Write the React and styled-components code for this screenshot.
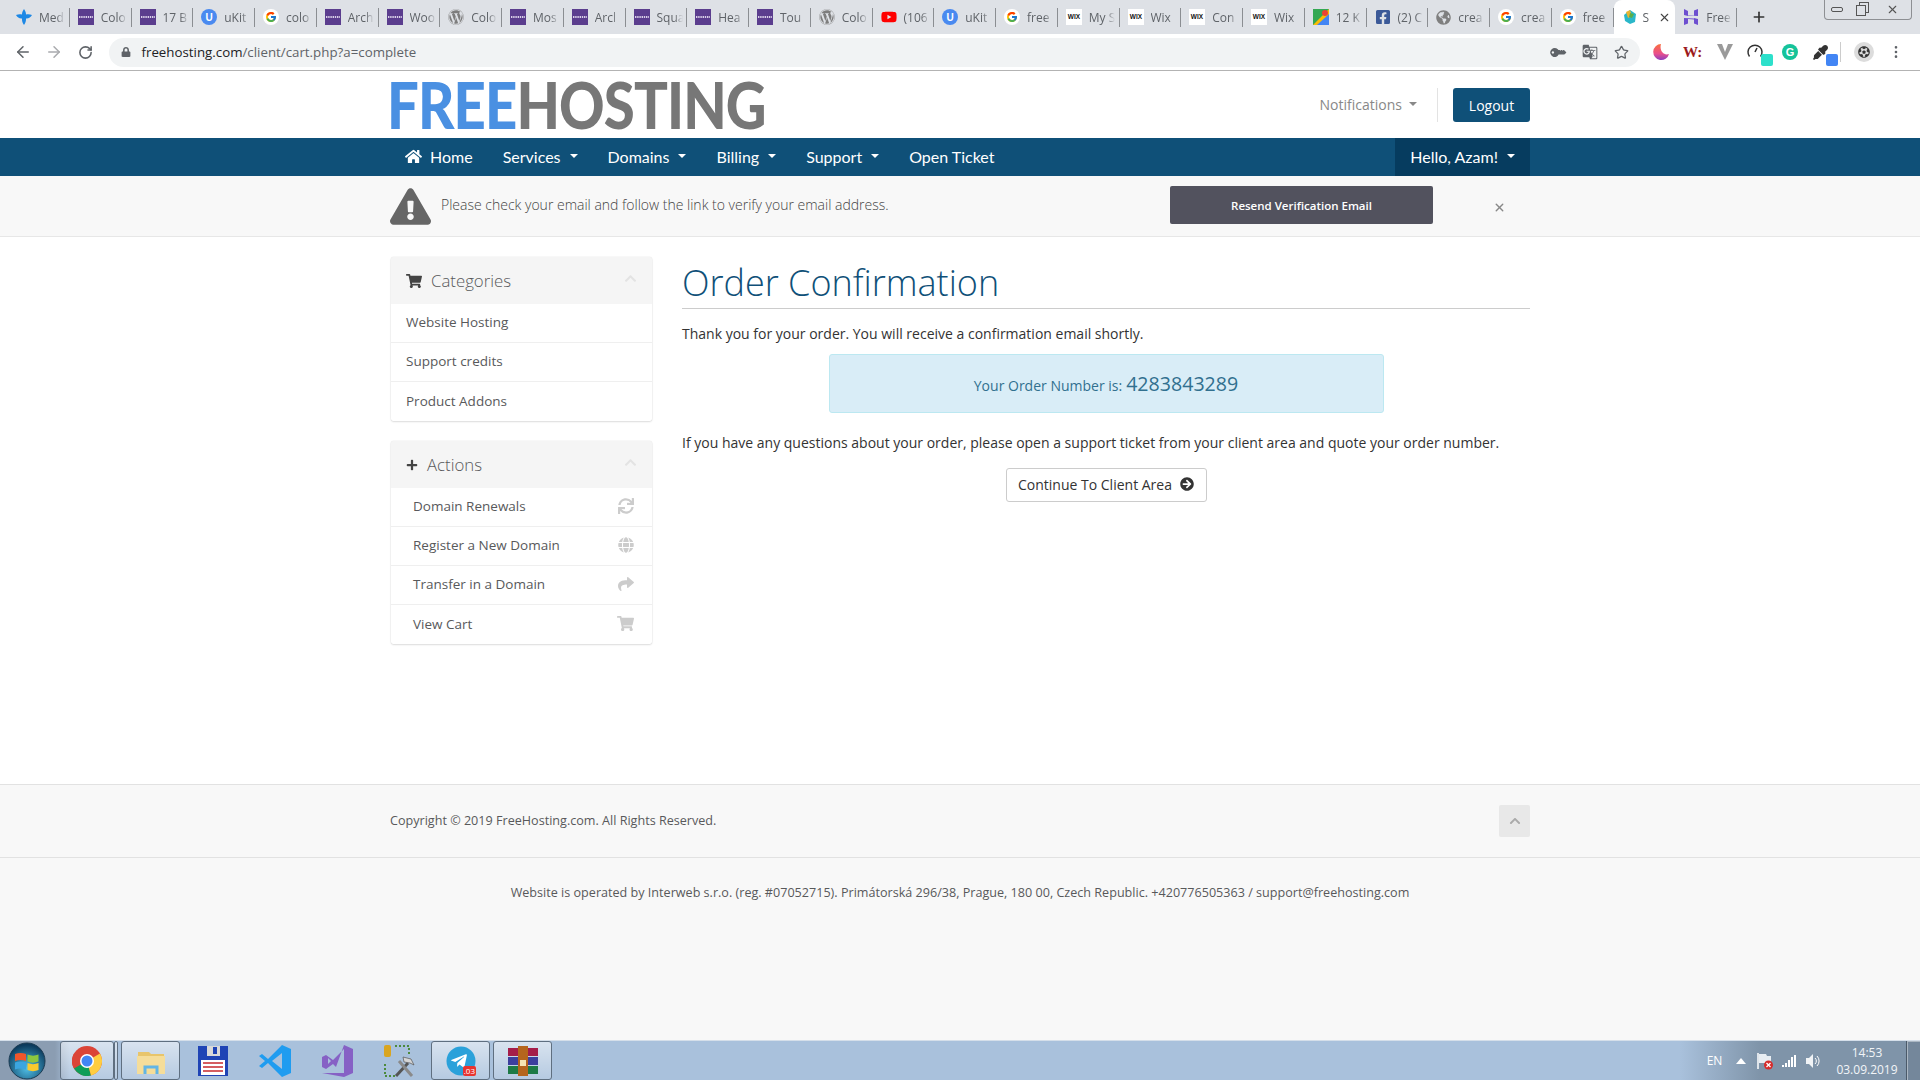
import React from 'react'
import styled, { createGlobalStyle } from 'styled-components'
import { ArrowLeft, ArrowRight, RotateCw, Star, MoreVertical, Plus, X } from 'lucide-react'
import {
  FaHome, FaShoppingCart, FaPlus, FaChevronUp, FaSync, FaGlobe, FaShare,
  FaExclamationTriangle, FaArrowCircleRight, FaKey, FaLock, FaWordpress,
  FaYoutube, FaFacebookSquare, FaGlobeAmericas, FaEyeDropper, FaFutbol, FaTelegramPlane,
} from 'react-icons/fa'
import { FcGoogle } from 'react-icons/fc'
import { MdGTranslate } from 'react-icons/md'

const GlobalStyle = createGlobalStyle`
  html, body { margin: 0; padding: 0; background: #fff; }
  body { font-family: "Open Sans", "Liberation Sans", sans-serif; font-size: 14px; color: #333; }
  * { box-sizing: border-box; }
`

const NAVY = '#0f5078'

const Page = styled.div`
  width: 1920px;
  height: 1080px;
  display: flex;
  flex-direction: column;
  overflow: hidden;
`

/* browser chrome */
const TabStrip = styled.div`
  height: 34px;
  background: #dee1e6;
  display: flex;
  padding-left: 8px;
`
const Tab = styled.div`
  width: 61.75px;
  height: 34px;
  display: flex;
  align-items: center;
  gap: 7px;
  padding-left: 8px;
  position: relative;
  flex: none;
  font-size: 12px;
  color: #5f6368;
  &::after {
    content: "";
    position: absolute;
    right: 0;
    top: 8px;
    height: 19px;
    width: 1px;
    background: #8b8e92;
  }
`
const ActiveTab = styled(Tab)`
  background: #fff;
  border-radius: 8px 8px 0 0;
  padding-left: 9px;
  gap: 6px;
  &::after { display: none; }
`
const TabLabel = styled.span`
  width: 29px;
  white-space: nowrap;
  -webkit-mask-image: linear-gradient(to right, #000 60%, transparent 90%);
  mask-image: linear-gradient(to right, #000 60%, transparent 90%);
`
const NewTab = styled.div`
  width: 44px;
  height: 34px;
  display: flex;
  align-items: center;
  justify-content: center;
  color: #333;
`
const WindowButtons = styled.div`
  margin-left: auto;
  margin-right: 8px;
  width: 88px;
  height: 20px;
  display: flex;
  border: 1px solid #8d8f93;
  border-top: none;
  border-radius: 0 0 4px 4px;
`
const WindowButton = styled.div`
  width: ${p => p.$w}px;
  display: flex;
  align-items: center;
  justify-content: center;
  color: #555;
`
const MinBar = styled.span`
  width: 12px;
  height: 5px;
  border: 1px solid #555;
  border-radius: 2px;
`
const RestoreBox = styled.span`
  width: 10px;
  height: 11px;
  margin: 2px 2px 0 0;
  border: 1px solid #555;
  box-shadow: 3px -3px 0 -1px #dee1e6, 3px -3px 0 0 #555;
`
const Toolbar = styled.div`
  height: 37px;
  background: #fff;
  border-bottom: 1px solid #b3b3b3;
  display: flex;
  align-items: center;
  padding: 0 0 0 13px;
  color: #5f6368;
`
const NavIcon = styled.div`
  width: 31.5px;
  display: flex;
  justify-content: center;
  flex: none;
  margin-left: ${p => p.$first ? '-6px' : '0'};
  color: ${p => p.$dim ? '#a9abae' : '#5f6368'};
`
const AddressPill = styled.div`
  width: 1531px;
  height: 29px;
  margin-left: 7px;
  background: #f1f3f4;
  border-radius: 15px;
  display: flex;
  align-items: center;
  padding: 0 2px 0 12px;
  flex: none;
`
const Url = styled.div`
  margin-left: 11px;
  font-size: 13.3px;
  color: #202124;
  flex: 1;
  span { color: #5f6368; }
`
const PillIcon = styled.div`
  width: 32px;
  display: flex;
  justify-content: center;
`
const KeyGlyph = styled(FaKey)`
  transform: rotate(-135deg);
`
const Extensions = styled.div`
  display: flex;
  align-items: center;
  margin-left: 5px;
`
const ExtIcon = styled.div`
  width: 32.4px;
  height: 30px;
  display: flex;
  align-items: center;
  justify-content: center;
  position: relative;
  flex: none;
`
const ExtBadge = styled.span`
  position: absolute;
  right: 1px;
  bottom: 1px;
  width: 12px;
  height: 12px;
  border-radius: 2px;
  background: ${p => p.$color};
`
const ExtDivider = styled.div`
  width: 1px;
  height: 20px;
  background: #ccc;
  margin: 0 7px 0 1px;
`
const AvatarCircle = styled.div`
  width: 20px;
  height: 20px;
  border-radius: 50%;
  background: #dcdcdc;
  display: flex;
  align-items: center;
  justify-content: center;
  color: #333;
`

/* site header */
const Container = styled.div`
  width: 1140px;
  margin: 0 auto;
  display: flex;
  align-items: center;
  height: 100%;
`
const SiteHeader = styled.header`
  height: 67px;
  background: #fff;
  flex: none;
`
const Logo = styled.div`
  font-family: Lato, sans-serif;
  font-weight: 900;
  font-size: 65px;
  line-height: 67px;
  letter-spacing: -1px;
  white-space: nowrap;
  color: #777;
  margin-left: -3px;
  transform: scaleX(0.865);
  transform-origin: left center;
  span { color: #4a90e2; }
`
const HeaderRight = styled.div`
  margin-left: auto;
  margin-top: 1px;
  display: flex;
  align-items: center;
`
const Notifications = styled.div`
  color: #888;
  font-size: 14px;
  display: flex;
  align-items: center;
  gap: 7px;
  margin-top: -2px;
  margin-right: 1px;
`
const HeaderDivider = styled.div`
  width: 1px;
  height: 34px;
  background: #e3e3e3;
  margin: 0 15px 0 19px;
`
const LogoutButton = styled.div`
  width: 77px;
  height: 34px;
  background: ${NAVY};
  border-radius: 3px;
  color: #fff;
  font-size: 14px;
  display: flex;
  align-items: center;
  justify-content: center;
`
const Caret = styled.span`
  width: 0;
  height: 0;
  display: inline-block;
  border-top: 4px solid ${p => p.$color || '#fff'};
  border-left: 4px solid transparent;
  border-right: 4px solid transparent;
  margin-left: ${p => p.$gap ?? 9}px;
`
const MainNav = styled.nav`
  height: 38px;
  background: ${NAVY};
  flex: none;
`
const NavItem = styled.div`
  height: 38px;
  padding: 0 15px 2px;
  display: flex;
  align-items: center;
  color: #fff;
  font-family: Lato, sans-serif;
  font-size: 16px;
  white-space: nowrap;
  background: ${p => p.$dark ? '#063c5f' : 'transparent'};
  margin-left: ${p => p.$right ? 'auto' : '0'};
  svg { margin-right: 8px; }
`
const AlertBar = styled.div`
  height: 61px;
  background: #f8f8f8;
  border-bottom: 1px solid #e7e7e7;
  padding-bottom: 2px;
  flex: none;
`
const AlertIcon = styled(FaExclamationTriangle)`
  margin-top: 2px;
  flex: none;
`
const AlertText = styled.div`
  margin: -2px 0 0 10px;
  font-weight: 300;
  font-size: 14px;
  color: #444;
  flex: 1;
`
const ResendButton = styled.div`
  width: 263px;
  height: 38px;
  background: #52525e;
  border-radius: 2px;
  color: #fff;
  font-size: 11.5px;
  font-weight: 600;
  display: flex;
  align-items: center;
  justify-content: center;
`
const CloseMark = styled.div`
  margin: 4px 24px 0 60px;
  display: flex;
  color: #888;
`

/* body */
const Content = styled.main`
  flex: 1;
  background: #fff;
`
const ContentInner = styled.div`
  width: 1140px;
  margin: 0 auto;
  padding-top: 20px;
  display: flex;
  gap: 30px;
  align-items: flex-start;
`
const Sidebar = styled.aside`
  width: 261px;
  margin-left: 1px;
  flex: none;
  display: flex;
  flex-direction: column;
  gap: 20px;
`
const Panel = styled.section`
  border-radius: 3px;
  overflow: hidden;
  box-shadow: 0 0 1px rgba(0, 0, 0, .25), 0 1px 2px rgba(0, 0, 0, .12);
`
const PanelHead = styled.div`
  height: 47px;
  background: #f5f5f5;
  display: flex;
  align-items: center;
  padding: 0 15px;
  font-size: 16.800px;
  font-weight: 300;
  color: #58595b;
  svg:first-child { color: #444; margin-right: ${p => p.$iconGap}px; }
  svg:last-child { margin-left: auto; color: #e3e3e3; margin-top: -4px; }
`
const PanelRow = styled.div`
  height: 39px;
  display: flex;
  align-items: center;
  justify-content: space-between;
  padding: 0 18px 2px ${p => p.$indent ? 22 : 15}px;
  font-size: 13.500px;
  color: #58595b;
  background: #fff;
  border-bottom: 1px solid #efefef;
  &:last-child { border-bottom: none; }
  svg { color: #ccc; }
`
const Main = styled.div`
  flex: 1;
  min-width: 0;
`
const Title = styled.h1`
  margin: 6px 0 0;
  font-size: 36px;
  line-height: 40px;
  font-weight: 300;
  color: ${NAVY};
  padding-bottom: 5px;
  border-bottom: 1px solid #ccc;
`
const Para = styled.p`
  margin: ${p => p.$top}px 0 0;
  line-height: 20px;
  font-size: 14px;
  color: #333;
`
const OrderBox = styled.div`
  width: 555px;
  height: 59px;
  margin: 10px auto 0;
  background: #d9edf7;
  border: 1px solid #bce8f1;
  border-radius: 3px;
  color: #31708f;
  display: flex;
  align-items: baseline;
  justify-content: center;
  padding-top: 15px;
  gap: 4px;
  b { font-weight: 400; font-size: 19.6px; }
`
const ContinueButton = styled.div`
  width: 201px;
  height: 34px;
  margin: 15px auto 0;
  padding-bottom: 2px;
  background: #fff;
  border: 1px solid #ccc;
  border-radius: 3px;
  display: flex;
  align-items: center;
  justify-content: center;
  gap: 8px;
  color: #333;
`

/* footer */
const FooterTop = styled.div`
  height: 74px;
  background: #f8f8f8;
  border-top: 1px solid #e2e2e2;
  border-bottom: 1px solid #e2e2e2;
  font-size: 12.6px;
  color: #58595b;
  flex: none;
`
const FooterNote = styled.span`
  margin-top: -2px;
`
const BackToTop = styled.div`
  margin-left: auto;
  width: 31px;
  height: 32px;
  background: #e8e8e8;
  border-radius: 2px;
  display: flex;
  align-items: center;
  justify-content: center;
  color: #aaa;
`
const FooterBottom = styled.div`
  height: 182px;
  background: #f8f8f8;
  padding-top: 25px;
  line-height: 20px;
  text-align: center;
  font-size: 12.6px;
  color: #58595b;
  flex: none;
`

/* windows taskbar */
const Taskbar = styled.div`
  height: 40px;
  flex: none;
  display: flex;
  align-items: center;
  background: linear-gradient(to right, #8b9db2 0, #8b9db2 55px, #a9c1dc 70px, #a9c1dc 1680px, #7f94a9 1760px, #7f94a9 100%);
  border-top: 1px solid #d5dfea;
`
const StartCell = styled.div`
  width: 60px;
  display: flex;
  justify-content: center;
  padding-right: 6px;
  flex: none;
`
const TaskCell = styled.div`
  width: ${p => p.$w || 59}px;
  height: 39px;
  margin-right: ${p => p.$mr ?? 3}px;
  flex: none;
  display: flex;
  align-items: center;
  justify-content: center;
  position: relative;
  ${p => p.$framed && `
    border: 1px solid #5f6f80;
    border-radius: 3px;
    background: linear-gradient(to bottom, rgba(255,255,255,.55), rgba(255,255,255,.15));
  `}
`
const Sliver = styled(TaskCell)`
  width: 4px;
  margin-right: 3px;
`
const PlaneIcon = styled(FaTelegramPlane)`
  position: absolute;
  left: 18px;
  top: 10px;
`
const CountBadge = styled.span`
  position: absolute;
  right: 13px;
  bottom: 3px;
  background: #e8342f;
  color: #fff;
  border-radius: 2px;
  font-size: 8px;
  line-height: 10px;
  padding: 0 1px;
`
const Tray = styled.div`
  margin-left: auto;
  display: flex;
  align-items: center;
  height: 39px;
  color: #fff;
`
const TrayCell = styled.div`
  width: ${p => p.$w || 24}px;
  display: flex;
  justify-content: center;
  align-items: center;
  font-size: 12px;
`
const Clock = styled.div`
  width: 78px;
  margin-left: 3px;
  text-align: center;
  font-size: 12px;
  line-height: 17px;
  color: #f2f5f8;
`
const ShowDesktop = styled.div`
  width: 14px;
  height: 39px;
  border-left: 1px solid #4b5a69;
  background: #74879b;
  box-shadow: inset 1px 1px 0 rgba(255, 255, 255, .4);
`

const ColorlibIcon = () => (
  <svg width="16" height="16" viewBox="0 0 16 16">
    <rect width="16" height="16" fill="#5b3d8e" />
    <line x1="1" y1="8" x2="15" y2="8" stroke="#d9cfe8" strokeWidth="2" strokeDasharray="1.4 .8" />
  </svg>
)
const LetterIcon = ({ bg, color, letter, size = 10, round }) => (
  <svg width="16" height="16" viewBox="0 0 16 16">
    {round ? <circle cx="8" cy="8" r="8" fill={bg} /> : <rect width="16" height="16" fill={bg} />}
    <text x="8" y="8" dy=".36em" textAnchor="middle" fontSize={size} fontWeight="700" fontFamily="Liberation Sans, sans-serif" fill={color}>{letter}</text>
  </svg>
)
const Favicon = ({ kind }) => {
  switch (kind) {
    case 'med':
      return (
        <svg width="16" height="16" viewBox="0 0 16 16">
          <path d="M8 0c1.400 2 2 3.600 2 5.500 2-.4 4-.3 6 .5-1.400 2.600-3.300 3.600-6 3.400.2 2.400-.6 4.600-2 6.600-1.400-2-2.200-4.200-2-6.600C3.300 9.600 1.400 8.600 0 6c2-.8 4-.9 6-.5C6 3.600 6.600 2 8 0z" fill="#1e88e5" />
        </svg>
      )
    case 'colorlib': return <ColorlibIcon />
    case 'ukit': return <LetterIcon bg="#4a8af0" color="#fff" letter="U" round />
    case 'google':
      return (
        <svg width="16" height="16" viewBox="0 0 16 16"><circle cx="8" cy="8" r="8" fill="#fff" /><FcGoogle x="2" y="2" size={12} /></svg>
      )
    case 'wp': return <FaWordpress size={16} color="#7d7d7d" />
    case 'yt': return <FaYoutube size={16} color="#f00" />
    case 'wix': return <LetterIcon bg="#fff" color="#111" letter="WIX" size={6.500} />
    case 'maps':
      return (
        <svg width="16" height="16" viewBox="0 0 16 16">
          <rect width="16" height="16" fill="#34a853" />
          <polygon points="0,16 16,0 16,16" fill="#fbbc04" />
          <polygon points="4,16 16,5 16,16" fill="#4285f4" />
          <circle cx="12" cy="4" r="3" fill="#ea4335" />
        </svg>
      )
    case 'fb': return <FaFacebookSquare size={16} color="#3b5998" />
    case 'globe': return <FaGlobeAmericas size={15} color="#7f7f7f" />
    case 'active':
      return (
        <svg width="14" height="16" viewBox="0 0 14 16">
          <path d="M1 6l6-5 6 4-1 8-5 2-5-3z" fill="#2ab7c9" />
          <path d="M3 3l4-2 2 6-4 2z" fill="#e9b531" />
          <path d="M7 4l4 1-2 4-3-1z" fill="#5bae48" />
        </svg>
      )
    case 'host':
      return (
        <svg width="16" height="16" viewBox="0 0 16 16">
          <path d="M1 0l4 2v4l6 .5V1.500L15 0v7L5 6.500V7L1 6zM1 9l10 .5V9l4 1v6l-4-1.500V10.500L5 10v4.500L1 16z" fill="#6d4fd0" />
        </svg>
      )
    default: return null
  }
}

const tabs = [
  ['med', 'Med'], ['colorlib', 'Colo'], ['colorlib', '17 B'], ['ukit', 'uKit'], ['google', 'colo'],
  ['colorlib', 'Arch'], ['colorlib', 'Woo'], ['wp', 'Colo'], ['colorlib', 'Mos'], ['colorlib', 'Arcl'],
  ['colorlib', 'Squa'], ['colorlib', 'Hea'], ['colorlib', 'Tou'], ['wp', 'Colo'], ['yt', '(106'],
  ['ukit', 'uKit'], ['google', 'free'], ['wix', 'My S'], ['wix', 'Wix'], ['wix', 'Con'],
  ['wix', 'Wix'], ['maps', '12 K'], ['fb', '(2) C'], ['globe', 'crea'], ['google', 'crea'], ['google', 'free'],
]

const Extras = () => (
  <Extensions>
    <ExtIcon>
      <svg width="18" height="18" viewBox="0 0 18 18">
        <defs>
          <linearGradient id="moon" x1="0" y1="0" x2="0" y2="1">
            <stop offset="0" stopColor="#f9703c" />
            <stop offset=".6" stopColor="#ea4f8c" />
            <stop offset="1" stopColor="#8d3fc0" />
          </linearGradient>
        </defs>
        <path d="M9 1a8 8 0 1 0 8 10c-5 2-10-3-8-10z" fill="url(#moon)" />
      </svg>
    </ExtIcon>
    <ExtIcon>
      <svg width="20" height="16" viewBox="0 0 20 16">
        <text x="0" y="13" fontSize="15" fontWeight="700" fontFamily="Liberation Serif, serif" fill="#9c1b1b">W:</text>
      </svg>
    </ExtIcon>
    <ExtIcon>
      <svg width="18" height="16" viewBox="0 0 18 16"><path d="M1 0h5l3 8 3-8h5l-8 16z" fill="#9a9a9a" /></svg>
    </ExtIcon>
    <ExtIcon>
      <svg width="16" height="16" viewBox="0 0 16 16" style={{ marginRight: 6 }}>
        <path d="M2.500 12.500a7 7 0 1 1 11 0" fill="none" stroke="#333" strokeWidth="1.500" />
        <path d="M8 8l2-4" stroke="#333" strokeWidth="1.500" />
      </svg>
      <ExtBadge $color="#2de0cb" />
    </ExtIcon>
    <ExtIcon>
      <LetterIcon bg="#15c39a" color="#fff" letter="G" size={11} round />
    </ExtIcon>
    <ExtIcon>
      <FaEyeDropper size={15} color="#333" style={{ marginRight: 5 }} />
      <ExtBadge $color="#4285f4" />
    </ExtIcon>
    <ExtDivider />
    <ExtIcon>
      <AvatarCircle><FaFutbol size={12} /></AvatarCircle>
    </ExtIcon>
    <ExtIcon><MoreVertical size={16} color="#5f6368" /></ExtIcon>
  </Extensions>
)

const BrowserChrome = () => (
  <>
    <TabStrip>
      {tabs.map(([kind, label], i) => (
        <Tab key={i}><Favicon kind={kind} /><TabLabel>{label}</TabLabel></Tab>
      ))}
      <ActiveTab>
        <Favicon kind="active" />
        <TabLabel style={{ width: 9 }}>S</TabLabel>
        <X size={13} color="#444" />
      </ActiveTab>
      <Tab><Favicon kind="host" /><TabLabel>Free</TabLabel></Tab>
      <NewTab><Plus size={16} strokeWidth={2.5} /></NewTab>
      <WindowButtons>
        <WindowButton $w={24}><MinBar /></WindowButton>
        <WindowButton $w={25}><RestoreBox /></WindowButton>
        <WindowButton $w={37}><X size={13} /></WindowButton>
      </WindowButtons>
    </TabStrip>
    <Toolbar>
      <NavIcon $first><ArrowLeft size={18} /></NavIcon>
      <NavIcon $dim><ArrowRight size={18} /></NavIcon>
      <NavIcon><RotateCw size={15} strokeWidth={2.500} /></NavIcon>
      <AddressPill>
        <FaLock size={10} color="#5f6368" />
        <Url>freehosting.com<span>/client/cart.php?a=complete</span></Url>
        <PillIcon><KeyGlyph size={13} color="#5f6368" /></PillIcon>
        <PillIcon><MdGTranslate size={16} color="#5f6368" /></PillIcon>
        <PillIcon><Star size={15} color="#5f6368" strokeWidth={2} /></PillIcon>
      </AddressPill>
      <Extras />
    </Toolbar>
  </>
)

const SiteTop = () => (
  <>
    <SiteHeader>
      <Container>
        <Logo><span>FREE</span>HOSTING</Logo>
        <HeaderRight>
          <Notifications>Notifications <Caret $color="#888" $gap={0} /></Notifications>
          <HeaderDivider />
          <LogoutButton>Logout</LogoutButton>
        </HeaderRight>
      </Container>
    </SiteHeader>
    <MainNav>
      <Container>
        <NavItem><FaHome size={17} />Home</NavItem>
        <NavItem>Services<Caret /></NavItem>
        <NavItem>Domains<Caret /></NavItem>
        <NavItem>Billing<Caret /></NavItem>
        <NavItem>Support<Caret /></NavItem>
        <NavItem>Open Ticket</NavItem>
        <NavItem $right $dark>Hello, Azam!<Caret /></NavItem>
      </Container>
    </MainNav>
    <AlertBar>
      <Container>
        <AlertIcon size={41} color="#666" />
        <AlertText>Please check your email and follow the link to verify your email address.</AlertText>
        <ResendButton>Resend Verification Email</ResendButton>
        <CloseMark><X size={13} strokeWidth={2.500} /></CloseMark>
      </Container>
    </AlertBar>
  </>
)

const SideMenu = () => (
  <Sidebar>
    <Panel>
      <PanelHead $iconGap={9}>
        <FaShoppingCart size={16} />Categories<FaChevronUp size={13} />
      </PanelHead>
      <PanelRow>Website Hosting</PanelRow>
      <PanelRow>Support credits</PanelRow>
      <PanelRow>Product Addons</PanelRow>
    </Panel>
    <Panel>
      <PanelHead $iconGap={9}>
        <FaPlus size={12} />Actions<FaChevronUp size={13} />
      </PanelHead>
      <PanelRow $indent>Domain Renewals<FaSync size={16} /></PanelRow>
      <PanelRow $indent>Register a New Domain<FaGlobe size={16} /></PanelRow>
      <PanelRow $indent>Transfer in a Domain<FaShare size={16} /></PanelRow>
      <PanelRow $indent>View Cart<FaShoppingCart size={17} /></PanelRow>
    </Panel>
  </Sidebar>
)

const Footer = () => (
  <>
    <FooterTop>
      <Container>
        <FooterNote>Copyright © 2019 FreeHosting.com. All Rights Reserved.</FooterNote>
        <BackToTop><FaChevronUp size={12} /></BackToTop>
      </Container>
    </FooterTop>
    <FooterBottom>
      Website is operated by Interweb s.r.o. (reg. #07052715). Primátorská 296/38, Prague, 180 00, Czech Republic. +420776505363 / support@freehosting.com
    </FooterBottom>
  </>
)

const WindowsTaskbar = () => (
  <Taskbar>
    <StartCell>
      <svg width="38" height="38" viewBox="0 0 38 38">
        <defs>
          <radialGradient id="orb" cx=".5" cy=".7" r=".65">
            <stop offset="0" stopColor="#4fc0e8" />
            <stop offset="1" stopColor="#0c3a5c" />
          </radialGradient>
        </defs>
        <circle cx="19" cy="19" r="18" fill="url(#orb)" stroke="#1c3b52" />
        <path d="M7 12c3.500-1.500 7.500-1.500 11 0v7c-3.500-1.500-7.500-1.500-11 0z" fill="#f0562b" />
        <path d="M19.500 12.500c3.500 1.500 7.500 1.500 11 0v7c-3.500 1.500-7.500 1.500-11 0z" fill="#8cc63f" />
        <path d="M7 20.500c3.500-1.500 7.500-1.500 11 0v7c-3.500-1.500-7.500-1.500-11 0z" fill="#3ba5e0" />
        <path d="M19.500 21c3.500 1.500 7.500 1.500 11 0v7c-3.500 1.500-7.500 1.500-11 0z" fill="#f9c92e" />
      </svg>
    </StartCell>
    <TaskCell $w={54} $mr={0} $framed>
      <svg width="30" height="30" viewBox="0 0 30 30">
        <circle cx="15" cy="15" r="15" fill="#db4437" />
        <path d="M15 15L2 22.500A15 15 0 0 1 2 7.500z" fill="#db4437" />
        <path d="M15 15L2 22.500A15 15 0 0 0 19 29.500z" fill="#0f9d58" />
        <path d="M15 15l4 14.500A15 15 0 0 0 28 7.500z" fill="#ffcd40" />
        <circle cx="15" cy="15" r="7" fill="#fff" />
        <circle cx="15" cy="15" r="5.500" fill="#4285f4" />
      </svg>
    </TaskCell>
    <Sliver $framed />
    <TaskCell $framed>
      <svg width="30" height="30" viewBox="0 0 30 30">
        <path d="M2 6h11l2 2h13v10H2z" fill="#e8c56b" />
        <path d="M1 10h28v18H1z" fill="#f5dd9a" />
        <path d="M9 28v-7h12v7" fill="none" stroke="#62b5e5" strokeWidth="3" />
      </svg>
    </TaskCell>
    <TaskCell>
      <svg width="32" height="34" viewBox="0 0 32 34">
        <path d="M1 2h30v30H1z" fill="#1f44b5" />
        <path d="M10 2h13v10H10z" fill="#d9d9d9" />
        <path d="M16 3h4v7h-4z" fill="#1f44b5" />
        <path d="M4 16h24v15H4z" fill="#fff" />
        <path d="M6 19h20M6 23h20M6 27h20" stroke="#c8282d" strokeWidth="1.500" />
      </svg>
    </TaskCell>
    <TaskCell>
      <svg width="32" height="34" viewBox="0 0 32 34">
        <path d="M23 1L9 15 3 10 0 12l6 5-6 5 3 2 6-5 14 14 9-4V5z" fill="#1f9cf0" />
        <path d="M23 9v16l-10-8z" fill="#a9c1dc" />
      </svg>
    </TaskCell>
    <TaskCell>
      <svg width="32" height="34" viewBox="0 0 32 34">
        <path d="M23 1l9 4v24l-9 4L1 29l22 0V5L12 16 5 11 1 13v10l4 2 7-5 3 3" fill="#8661c5" />
        <path d="M7 14v6l3-3z" fill="#a9c1dc" />
      </svg>
    </TaskCell>
    <TaskCell>
      <svg width="32" height="34" viewBox="0 0 32 34">
        <rect x="1" y="1" width="7" height="12" rx="2" fill="#d9a520" />
        <path d="M12 2h14v10M2 20v12h10" fill="none" stroke="#4d8a3c" strokeWidth="2" strokeDasharray="2 2" />
        <path d="M13 32l12-13" stroke="#555" strokeWidth="3" />
        <path d="M16 17l13 15" stroke="#8a8a8a" strokeWidth="3" />
        <path d="M20 13l8 2 3 6-4-2-6-1z" fill="#d5d5d5" stroke="#555" strokeWidth=".7" />
      </svg>
    </TaskCell>
    <TaskCell $framed>
      <svg width="30" height="30" viewBox="0 0 30 30"><circle cx="15" cy="15" r="14.500" fill="#2aa1da" /></svg>
      <PlaneIcon size={18} color="#fff" />
      <CountBadge>.03</CountBadge>
    </TaskCell>
    <TaskCell $framed>
      <svg width="32" height="32" viewBox="0 0 32 32">
        <rect x="1" y="3" width="30" height="8" fill="#a51d4a" />
        <rect x="1" y="12" width="30" height="8" fill="#3c3f9e" />
        <rect x="1" y="21" width="30" height="8" fill="#1d7a45" />
        <rect x="11" y="1" width="10" height="30" fill="#b5651d" />
        <rect x="13" y="15" width="6" height="6" fill="#f5e6b3" />
      </svg>
    </TaskCell>
    <Tray>
      <TrayCell $w={29}>EN</TrayCell>
      <TrayCell>
        <svg width="10" height="6" viewBox="0 0 10 6"><path d="M5 0l5 6H0z" fill="#fff" /></svg>
      </TrayCell>
      <TrayCell>
        <svg width="18" height="18" viewBox="0 0 18 18">
          <path d="M2 1v16" stroke="#fff" strokeWidth="1.500" />
          <path d="M3 2h7l1 2h4v7H3z" fill="#e8edf2" />
          <circle cx="12.500" cy="13" r="4.500" fill="#d62b2b" />
          <path d="M10.500 11l4 4M14.500 11l-4 4" stroke="#fff" strokeWidth="1.300" />
        </svg>
      </TrayCell>
      <TrayCell>
        <svg width="16" height="14" viewBox="0 0 16 14">
          <path d="M1 11h2v2H1zM4 9h2v4H4zM7 6h2v7H7zM10 3h2v10h-2zM13 1h2v12h-2z" fill="#fff" />
        </svg>
      </TrayCell>
      <TrayCell>
        <svg width="16" height="16" viewBox="0 0 16 16">
          <path d="M1 5h3l4-4v14l-4-4H1z" fill="#f0f3f6" />
          <path d="M10 5a4 4 0 0 1 0 6M12 3a7 7 0 0 1 0 10" fill="none" stroke="#fff" />
        </svg>
      </TrayCell>
      <Clock>14:53<br />03.09.2019</Clock>
      <ShowDesktop />
    </Tray>
  </Taskbar>
)

export default function App() {
  return (
    <Page>
      <GlobalStyle />
      <BrowserChrome />
      <SiteTop />
      <Content>
        <ContentInner>
          <SideMenu />
          <Main>
            <Title>Order Confirmation</Title>
            <Para $top={15}>Thank you for your order. You will receive a confirmation email shortly.</Para>
            <OrderBox>Your Order Number is: <b>4283843289</b></OrderBox>
            <Para $top={20}>If you have any questions about your order, please open a support ticket from your client area and quote your order number.</Para>
            <ContinueButton>Continue To Client Area <FaArrowCircleRight size={14} /></ContinueButton>
          </Main>
        </ContentInner>
      </Content>
      <Footer />
      <WindowsTaskbar />
    </Page>
  )
}
